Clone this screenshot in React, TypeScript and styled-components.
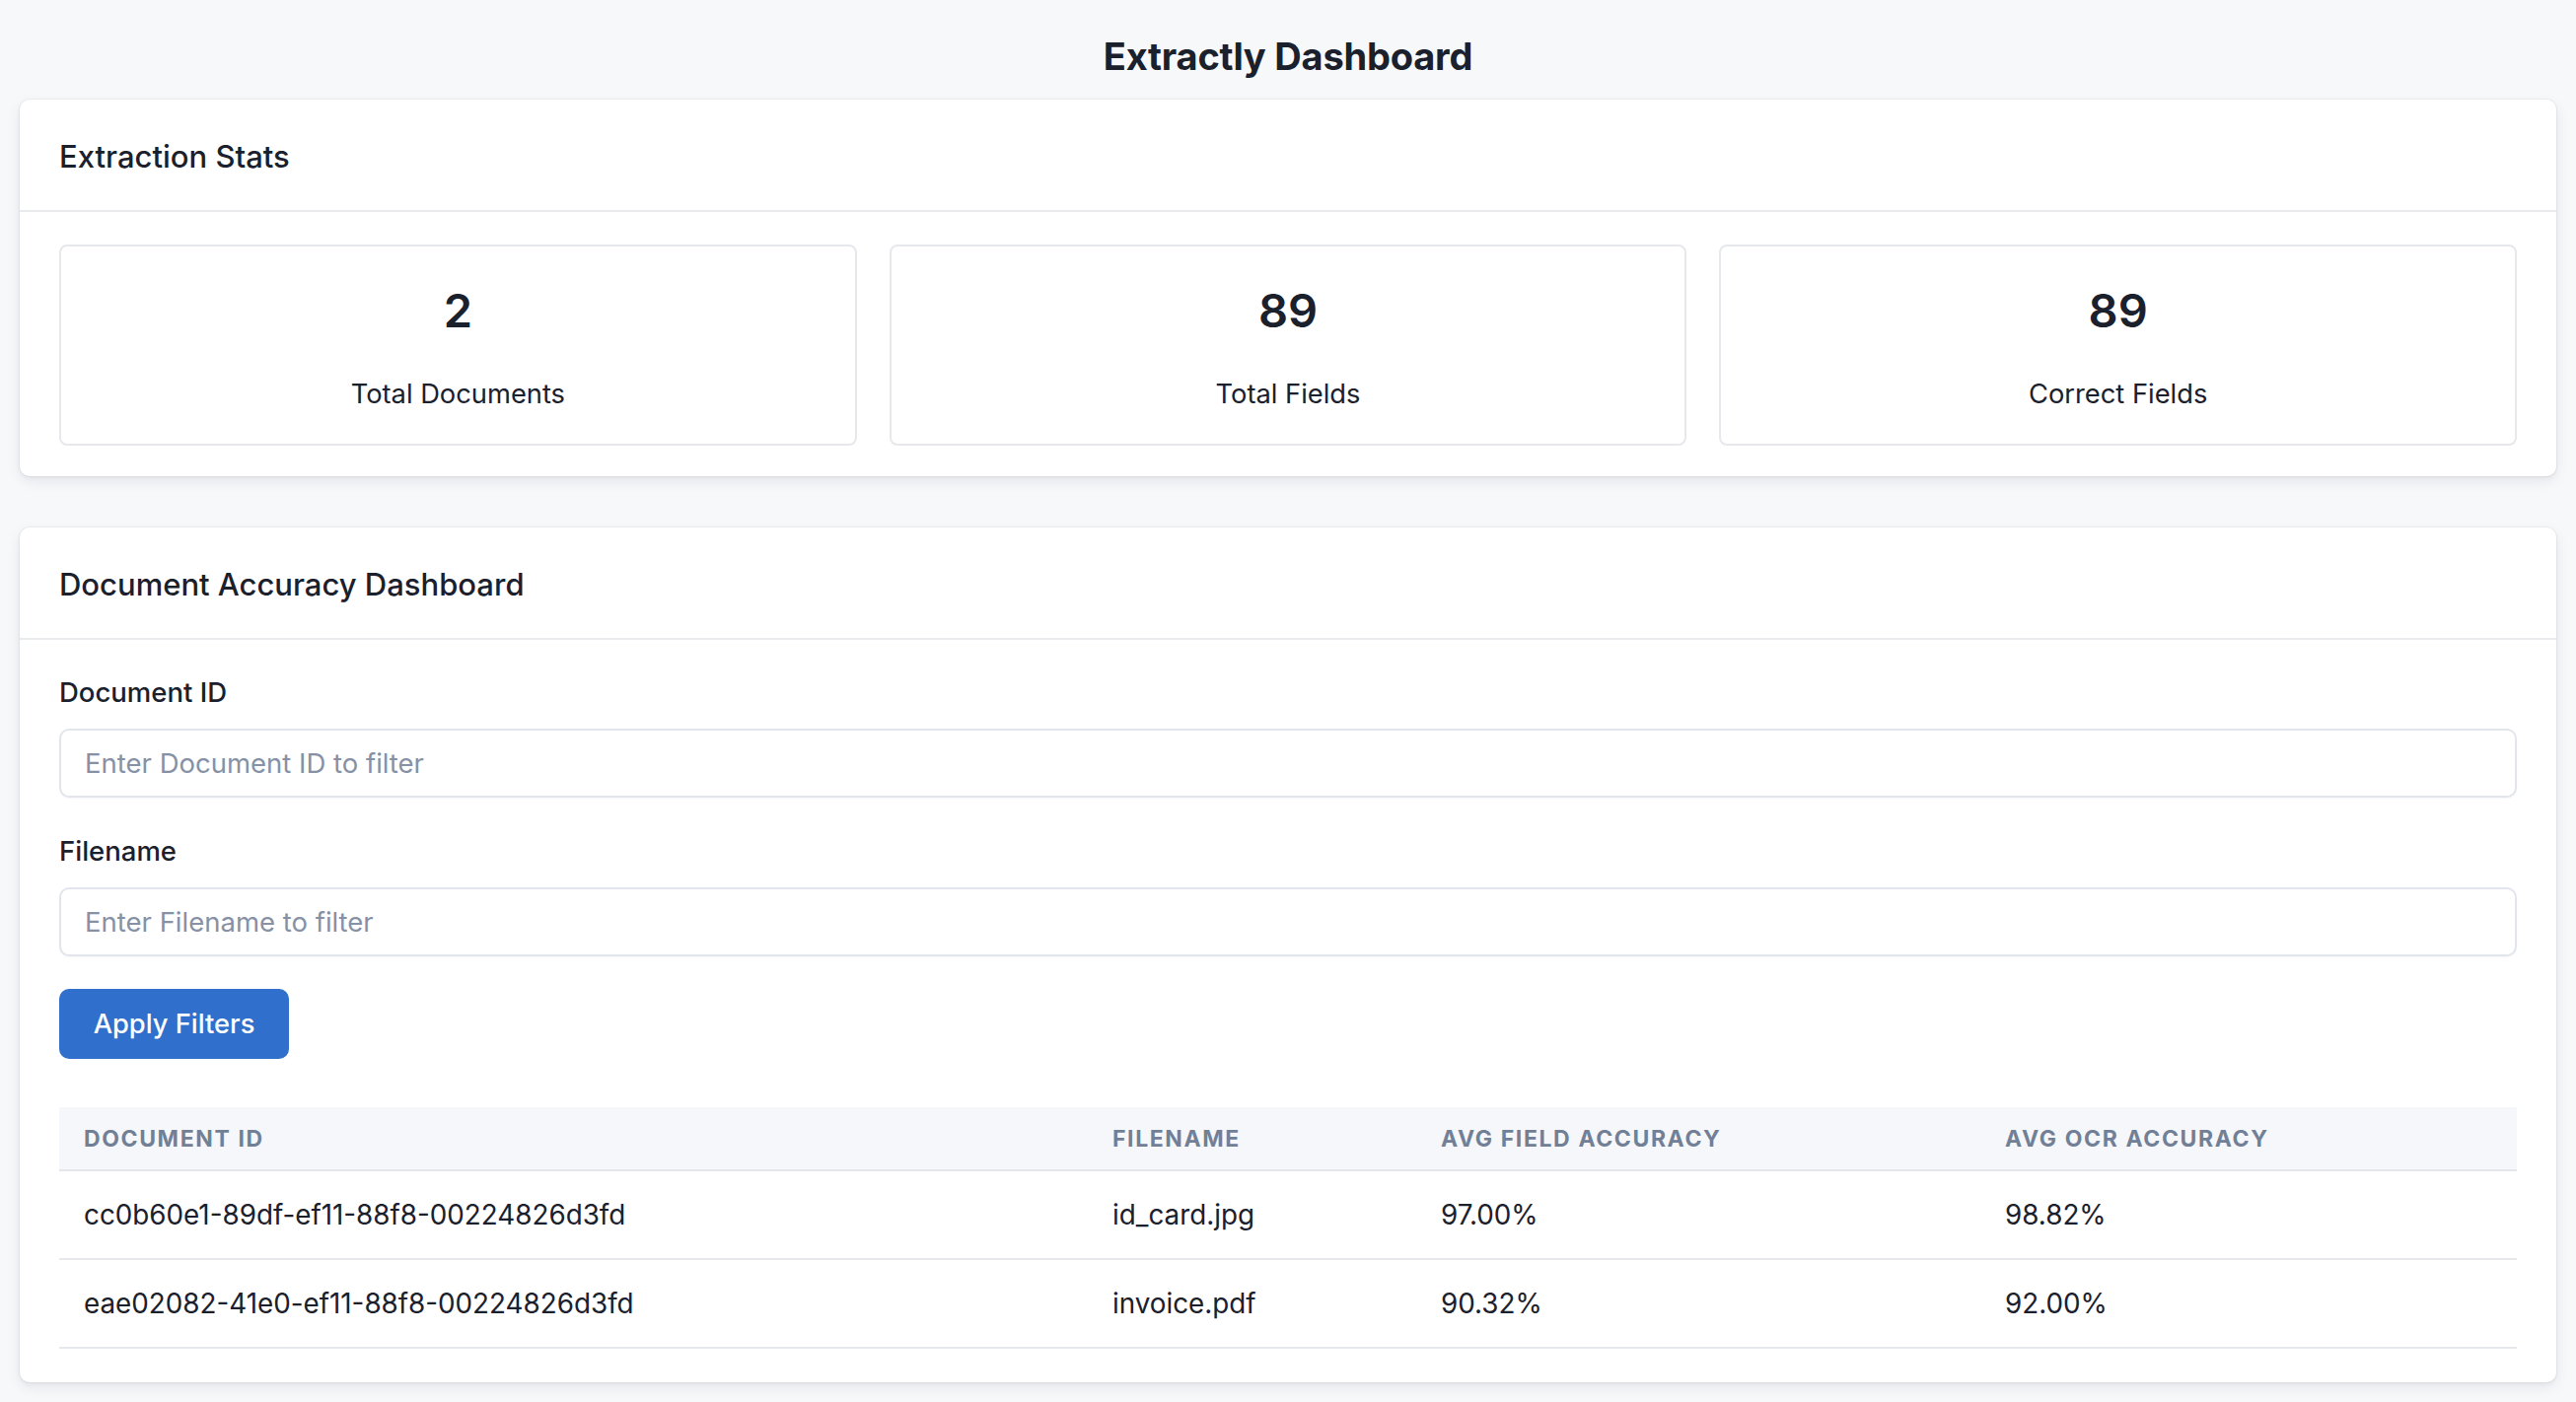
import React from "react";
import styled, { createGlobalStyle } from "styled-components";

const GlobalStyle = createGlobalStyle`
  * { box-sizing: border-box; }
  html, body { margin: 0; padding: 0; }
  body {
    background: #f7f8fa;
    font-family: Inter, "Noto Sans", "Liberation Sans", sans-serif;
    color: #1a202c;
  }
`;

const Page = styled.div`
  display: flex;
  flex-direction: column;
  padding: 22px 20px 20px;
`;

const Title = styled.h1`
  margin: 0 0 9px;
  text-align: center;
  font-size: 38px;
  line-height: 70px;
  font-weight: 700;
  color: #1a202c;
  letter-spacing: -0.2px;
`;

const Card = styled.section<{ $gap?: number }>`
  background: #ffffff;
  border-radius: 10px;
  box-shadow: 0 0 0 1px rgba(20, 30, 50, 0.04), 0 5px 14px rgba(20, 30, 50, 0.08),
    0 2px 4px rgba(20, 30, 50, 0.04);
  margin-bottom: ${(p) => p.$gap ?? 0}px;
`;

const CardHeader = styled.header`
  height: 114px;
  display: flex;
  align-items: center;
  padding: 4px 40px 0;
  border-bottom: 2px solid #e8eaee;
`;

const CardTitle = styled.h2`
  margin: 0;
  font-size: 31px;
  font-weight: 500;
  line-height: 1.2;
  color: #1a202c;
`;

const StatsBody = styled.div`
  padding: 33px 40px 31px;
  display: grid;
  grid-template-columns: repeat(3, 1fr);
  gap: 33px;
`;

const StatBox = styled.div`
  height: 204px;
  border: 2px solid #e6e8ec;
  border-radius: 8px;
  display: flex;
  flex-direction: column;
  align-items: center;
  padding-top: 36px;
  gap: 37px;
`;

const StatNumber = styled.div`
  font-size: 47px;
  line-height: 58px;
  font-weight: 600;
  color: #1a202c;
`;

const StatLabel = styled.div`
  font-size: 27.3px;
  line-height: 38px;
  color: #1a202c;
`;

const FilterBody = styled.div`
  padding: 32px 40px 34px;
  display: flex;
  flex-direction: column;
`;

const Field = styled.div`
  display: flex;
  flex-direction: column;
  margin-bottom: 33px;
`;

const Label = styled.label`
  font-size: 27.5px;
  line-height: 42px;
  font-weight: 500;
  margin-bottom: 16px;
  color: #1a202c;
`;

const Input = styled.input`
  height: 70px;
  width: 100%;
  border: 2px solid #e2e6ec;
  border-radius: 10px;
  padding: 0 24px;
  font-family: inherit;
  font-size: 27.5px;
  color: #1a202c;
  background: #fff;
  box-shadow: 0 1px 2px rgba(20, 30, 50, 0.04);
  outline: none;
  &::placeholder {
    color: #8691a5;
  }
`;

const Button = styled.button`
  align-self: flex-start;
  height: 71px;
  width: 233px;
  border: none;
  border-radius: 10px;
  background: #306fcb;
  color: #ffffff;
  font-family: inherit;
  font-size: 27.3px;
  font-weight: 500;
  cursor: pointer;
  margin-bottom: 49px;
`;

const Table = styled.table`
  width: 100%;
  border-collapse: collapse;
  table-layout: fixed;
`;

const HeadRow = styled.tr`
  background: #f6f7fa;
  border-bottom: 2px solid #e2e5ea;
`;

const Th = styled.th`
  height: 64px;
  padding: 0 25px;
  text-align: left;
  font-size: 23px;
  font-weight: 700;
  letter-spacing: 0.07em;
  text-transform: uppercase;
  color: #718096;
`;

const Row = styled.tr`
  border-bottom: 2px solid #e6e8ec;
`;

const Td = styled.td`
  height: 90px;
  padding: 0 25px;
  font-size: 27.8px;
  color: #1a202c;
  white-space: nowrap;
`;

const rows = [
  { id: "cc0b60e1-89df-ef11-88f8-00224826d3fd", file: "id_card.jpg", field: "97.00%", ocr: "98.82%" },
  { id: "eae02082-41e0-ef11-88f8-00224826d3fd", file: "invoice.pdf", field: "90.32%", ocr: "92.00%" },
];

const stats = [
  { value: "2", label: "Total Documents" },
  { value: "89", label: "Total Fields" },
  { value: "89", label: "Correct Fields" },
];

export default function App() {
  return (
    <>
      <GlobalStyle />
      <Page>
        <Title>Extractly Dashboard</Title>
        <Card $gap={52}>
          <CardHeader>
            <CardTitle>Extraction Stats</CardTitle>
          </CardHeader>
          <StatsBody>
            {stats.map((s) => (
              <StatBox key={s.label}>
                <StatNumber>{s.value}</StatNumber>
                <StatLabel>{s.label}</StatLabel>
              </StatBox>
            ))}
          </StatsBody>
        </Card>
        <Card>
          <CardHeader>
            <CardTitle>Document Accuracy Dashboard</CardTitle>
          </CardHeader>
          <FilterBody>
            <Field>
              <Label htmlFor="docid">Document ID</Label>
              <Input id="docid" placeholder="Enter Document ID to filter" />
            </Field>
            <Field>
              <Label htmlFor="fname">Filename</Label>
              <Input id="fname" placeholder="Enter Filename to filter" />
            </Field>
            <Button>Apply Filters</Button>
            <Table>
              <colgroup>
                <col style={{ width: 1043 }} />
                <col style={{ width: 333 }} />
                <col style={{ width: 572 }} />
                <col />
              </colgroup>
              <thead>
                <HeadRow>
                  <Th>Document ID</Th>
                  <Th>Filename</Th>
                  <Th>Avg Field Accuracy</Th>
                  <Th>Avg OCR Accuracy</Th>
                </HeadRow>
              </thead>
              <tbody>
                {rows.map((r) => (
                  <Row key={r.id}>
                    <Td>{r.id}</Td>
                    <Td>{r.file}</Td>
                    <Td>{r.field}</Td>
                    <Td>{r.ocr}</Td>
                  </Row>
                ))}
              </tbody>
            </Table>
          </FilterBody>
        </Card>
      </Page>
    </>
  );
}
